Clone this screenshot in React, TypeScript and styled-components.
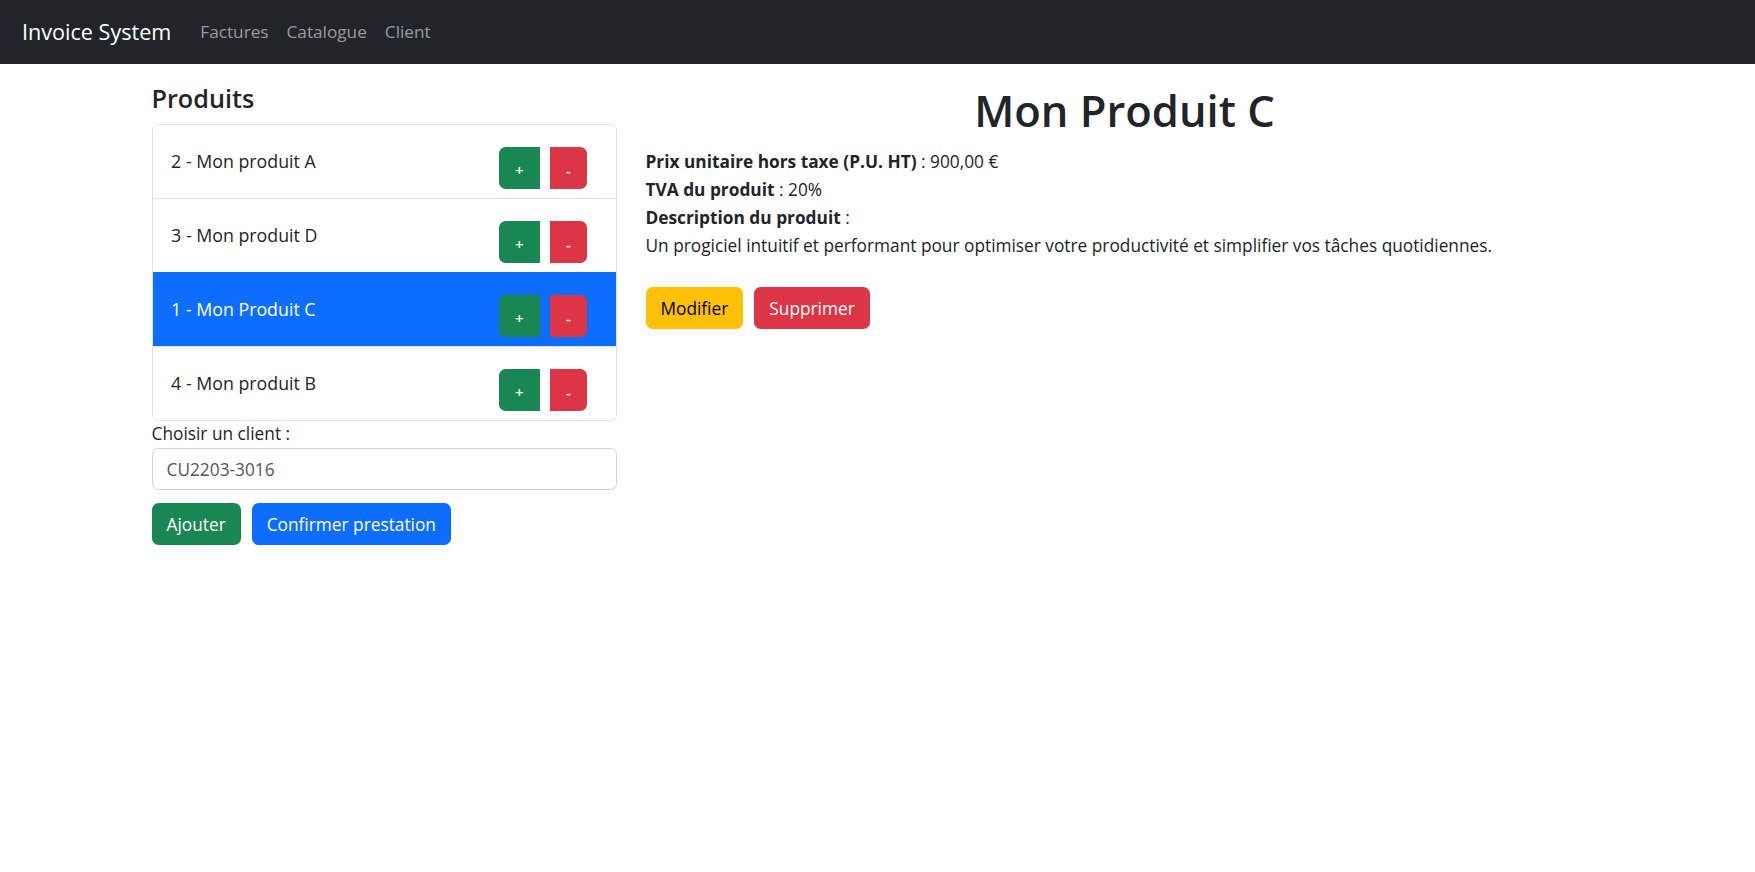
import React from "react";
import styled, { createGlobalStyle } from "styled-components";

const Global = createGlobalStyle`
  html, body { margin: 0; padding: 0; background: #fff; }
  body {
    font-family: "Open Sans", "Noto Sans", sans-serif;
    font-size: 17.3px;
    line-height: 26.4px;
    color: #212529;
  }
  * { box-sizing: border-box; }
`;

const NavBar = styled.nav`
  height: 64px;
  background: #212529;
  display: flex;
  align-items: center;
  padding: 0 22px;
`;

const Brand = styled.a`
  color: #fff;
  font-size: 21.6px;
  margin-right: 20px;
  text-decoration: none;
`;

const NavLink = styled.a`
  color: rgba(255, 255, 255, 0.55);
  padding: 0 9px;
  font-size: 17.2px;
  text-decoration: none;
`;

const Container = styled.main`
  width: 1452px;
  margin: 0 auto;
  display: grid;
  grid-template-columns: 465px 1fr;
  column-gap: 29px;
`;

const LeftCol = styled.section`
  display: flex;
  flex-direction: column;
`;

const RightCol = styled.section`
  display: flex;
  flex-direction: column;
`;

const SectionTitle = styled.h4`
  margin: 15px 0 7px;
  font-size: 25.2px;
  font-weight: 600;
  line-height: 38px;
`;

const ListGroup = styled.ul`
  list-style: none;
  margin: 0;
  padding: 0;
  border: 1px solid #dfe1e3;
  border-radius: 6.6px;
  overflow: hidden;
`;

const ListItem = styled.li<{ $active?: boolean }>`
  display: flex;
  align-items: center;
  justify-content: space-between;
  padding: 9px 17.6px;
  font-size: 17.8px;
  background: ${(p) => (p.$active ? "#0d6efd" : "#fff")};
  color: ${(p) => (p.$active ? "#fff" : "#212529")};
  border-top: 1px solid ${(p) => (p.$active ? "#0d6efd" : "#dfe1e3")};
  &:first-child { border-top: none; }
`;

const ItemLabel = styled.span`
  padding-left: 1px;
`;

const QtyGroup = styled.div`
  display: flex;
  gap: 10px;
  margin-top: 13px;
  margin-right: 11px;
`;

const QtyButton = styled.button<{ $kind: "plus" | "minus" }>`
  height: 42px;
  width: ${(p) => (p.$kind === "plus" ? "41px" : "37px")};
  border: none;
  color: #fff;
  font-family: inherit;
  font-size: 15px;
  font-weight: 600;
  padding: 4px 0 0;
  background: ${(p) => (p.$kind === "plus" ? "#198754" : "#dc3545")};
  border-radius: ${(p) => (p.$kind === "plus" ? "6.6px 0 0 6.6px" : "0 6.6px 6.6px 0")};
`;

const Label = styled.label`
  display: block;
`;

const Input = styled.input`
  margin-top: 1px;
  height: 42px;
  width: 100%;
  border: 1px solid #ced4da;
  border-radius: 6.6px;
  padding: 0 14px;
  font-family: inherit;
  font-size: 17.3px;
  color: #52575c;
  outline: none;
`;

const ButtonRow = styled.div<{ $top: number }>`
  display: flex;
  gap: 11px;
  margin-top: ${(p) => p.$top}px;
`;

const Btn = styled.button<{ $variant: "success" | "primary" | "warning" | "danger" }>`
  height: 42px;
  padding: 0 15px;
  border: none;
  border-radius: 6.6px;
  font-family: inherit;
  font-size: 17.3px;
  color: ${(p) => (p.$variant === "warning" ? "#000" : "#fff")};
  background: ${(p) =>
    ({ success: "#198754", primary: "#0d6efd", warning: "#ffc107", danger: "#dc3545" })[p.$variant]};
`;

const ProductTitle = styled.h1`
  margin: 21px 0 11px;
  text-align: center;
  font-size: 43.5px;
  font-weight: 600;
  line-height: 52px;
`;

const InfoLine = styled.div`
  line-height: 28px;
`;

const products = [
  { id: 2, name: "Mon produit A" },
  { id: 3, name: "Mon produit D" },
  { id: 1, name: "Mon Produit C", active: true },
  { id: 4, name: "Mon produit B" },
];

export default function App() {
  return (
    <>
      <Global />
      <NavBar>
        <Brand>Invoice System</Brand>
        <NavLink>Factures</NavLink>
        <NavLink>Catalogue</NavLink>
        <NavLink>Client</NavLink>
      </NavBar>
      <Container>
        <LeftCol>
          <SectionTitle>Produits</SectionTitle>
          <ListGroup>
            {products.map((p) => (
              <ListItem key={p.id} $active={p.active}>
                <ItemLabel>
                  {p.id} - {p.name}
                </ItemLabel>
                <QtyGroup>
                  <QtyButton $kind="plus">+</QtyButton>
                  <QtyButton $kind="minus">-</QtyButton>
                </QtyGroup>
              </ListItem>
            ))}
          </ListGroup>
          <Label>Choisir un client :</Label>
          <Input defaultValue="CU2203-3016" />
          <ButtonRow $top={13}>
            <Btn $variant="success">Ajouter</Btn>
            <Btn $variant="primary">Confirmer prestation</Btn>
          </ButtonRow>
        </LeftCol>
        <RightCol>
          <ProductTitle>Mon Produit C</ProductTitle>
          <InfoLine>
            <b>Prix unitaire hors taxe (P.U. HT)</b> : 900,00 €
          </InfoLine>
          <InfoLine>
            <b>TVA du produit</b> : 20%
          </InfoLine>
          <InfoLine>
            <b>Description du produit</b> :
          </InfoLine>
          <InfoLine>
            Un progiciel intuitif et performant pour optimiser votre productivité et simplifier vos tâches
            quotidiennes.
          </InfoLine>
          <ButtonRow $top={27}>
            <Btn $variant="warning">Modifier</Btn>
            <Btn $variant="danger">Supprimer</Btn>
          </ButtonRow>
        </RightCol>
      </Container>
    </>
  );
}
